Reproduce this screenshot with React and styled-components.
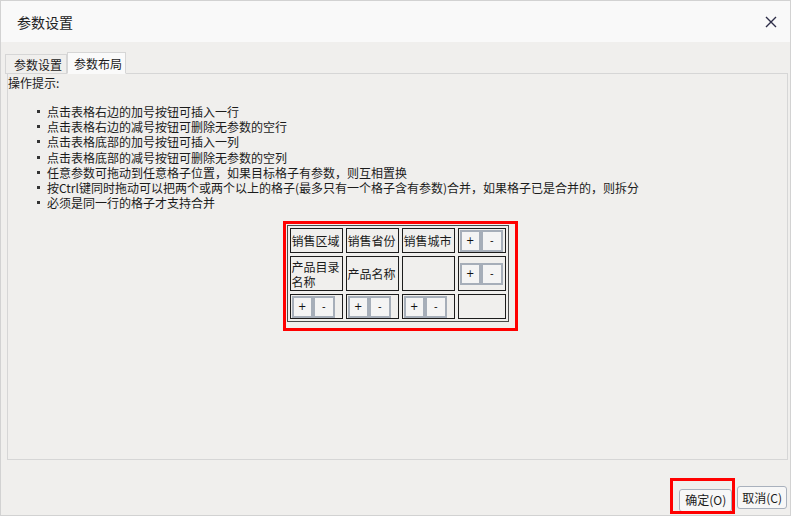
import React from "react";
import styled, { createGlobalStyle } from "styled-components";

const GlobalStyle = createGlobalStyle`
  html, body {
    margin: 0;
    padding: 0;
    background: #ffffff;
  }
  body {
    font-family: "Noto Sans CJK SC", "Microsoft YaHei", sans-serif;
    color: #1b1b1b;
  }
`;

const Dialog = styled.div`
  box-sizing: border-box;
  width: 791px;
  height: 516px;
  border: 1px solid #d2d2d2;
  background: #f0efed;
  display: flex;
  flex-direction: column;
`;

const Header = styled.div`
  height: 41px;
  flex-shrink: 0;
  background: #f9f9f9;
  display: flex;
  align-items: center;
  justify-content: space-between;
  padding: 0 12px 0 16px;
`;

const Title = styled.div`
  font-size: 14px;
  line-height: 20px;
  color: #222;
`;

const CloseButton = styled.button`
  border: 0;
  background: transparent;
  padding: 0;
  width: 14px;
  height: 14px;
  display: flex;
  align-items: center;
  justify-content: center;
  cursor: pointer;
`;

const Body = styled.div`
  flex: 1;
  display: flex;
  flex-direction: column;
  padding: 11px 2px 0 6px;
  min-height: 0;
`;

const TabStrip = styled.div`
  display: flex;
  align-items: flex-end;
  height: 21px;
  margin: 0 0 -1px -2px;
  position: relative;
  z-index: 1;
`;

const Tab = styled.div`
  box-sizing: border-box;
  width: ${(p) => p.$width}px;
  height: ${(p) => (p.$active ? 22 : 20)}px;
  padding-left: ${(p) => (p.$active ? 6 : 8)}px;
  font-size: 12px;
  line-height: ${(p) => (p.$active ? 21 : 19)}px;
  border: 1px solid #d6d6d6;
  border-bottom: ${(p) => (p.$active ? "1px solid #fafafa" : "1px solid #d6d6d6")};
  background: ${(p) => (p.$active ? "#fafafa" : "#f0efed")};
  color: #1b1b1b;
`;

const Panel = styled.div`
  flex: 1;
  border: 1px solid #d6d6d6;
  font-size: 12px;
  line-height: 15.2px;
`;

const Hint = styled.div`
  padding: 1px 0 0 0;
  line-height: 15px;
`;

const Tips = styled.ul`
  list-style: none;
  margin: 14px 0 15px 0;
  padding: 0 0 0 39px;
`;

const Tip = styled.li`
  position: relative;
  line-height: 15.17px;
  white-space: nowrap;

  &::before {
    content: "";
    position: absolute;
    left: -10px;
    top: 6px;
    width: 3px;
    height: 3px;
    background: #333;
  }
`;

const LayoutArea = styled.div`
  display: flex;
  justify-content: center;
`;

/* red highlight frame drawn over a block */
const Marked = styled.div`
  position: relative;
  display: inline-block;

  &::after {
    content: "";
    position: absolute;
    top: ${(p) => -p.$t}px;
    left: ${(p) => -p.$l}px;
    right: ${(p) => -p.$r}px;
    bottom: ${(p) => -p.$b}px;
    border: 3px solid #ff0000;
    pointer-events: none;
  }
`;

const Grid = styled.div`
  display: grid;
  grid-template-columns: 53px 53px 53px 48px;
  grid-template-rows: 25px 35px 25px;
  gap: 3px;
  padding: 2px;
  border: 1px solid #4a4a4a;
`;

const Cell = styled.div`
  box-sizing: border-box;
  border: 1px solid #1c1c1c;
  padding: 0 1px;
  display: flex;
  align-items: center;
  font-size: 12px;
  line-height: 15px;
  color: #1b1b1b;
  overflow: hidden;
`;

const PairGroup = styled.div`
  display: flex;
`;

const MiniButton = styled.button`
  box-sizing: border-box;
  width: 21.5px;
  height: 22px;
  border: 2px solid #a6aeb9;
  background: #f4f4f4;
  padding: 0;
  font-family: "DejaVu Sans", sans-serif;
  font-size: 10px;
  line-height: 18px;
  color: #111;
  cursor: pointer;
`;

const Footer = styled.div`
  height: 55px;
  flex-shrink: 0;
  display: flex;
  justify-content: flex-end;
  align-items: flex-start;
  gap: 5px;
  padding: 26px 3px 0 0;
  box-sizing: border-box;
`;

const DialogButton = styled.button`
  box-sizing: border-box;
  height: 23px;
  min-width: ${(p) => p.$width}px;
  padding: 0 4px;
  border: 1px solid #a9b1bd;
  border-radius: 3px;
  background: #f7f7f7;
  font-family: "Noto Sans CJK SC", "Microsoft YaHei", sans-serif;
  font-size: 12px;
  line-height: 20px;
  color: #1b1b1b;
  cursor: pointer;
`;

const tips = [
  "点击表格右边的加号按钮可插入一行",
  "点击表格右边的减号按钮可删除无参数的空行",
  "点击表格底部的加号按钮可插入一列",
  "点击表格底部的减号按钮可删除无参数的空列",
  "任意参数可拖动到任意格子位置，如果目标格子有参数，则互相置换",
  "按Ctrl键同时拖动可以把两个或两个以上的格子(最多只有一个格子含有参数)合并，如果格子已是合并的，则拆分",
  "必须是同一行的格子才支持合并",
];

const Pair = () => (
  <PairGroup>
    <MiniButton>+</MiniButton>
    <MiniButton>-</MiniButton>
  </PairGroup>
);

const CloseIcon = () => (
  <svg width="12" height="12" viewBox="0 0 12 12">
    <path d="M1 1 L11 11 M11 1 L1 11" stroke="#2d2d47" strokeWidth="1.4" fill="none" />
  </svg>
);

const App = () => (
  <>
    <GlobalStyle />
    <Dialog>
      <Header>
        <Title>参数设置</Title>
        <CloseButton aria-label="关闭">
          <CloseIcon />
        </CloseButton>
      </Header>

      <Body>
        <TabStrip>
          <Tab $width={62}>参数设置</Tab>
          <Tab $width={59} $active>
            参数布局
          </Tab>
        </TabStrip>

        <Panel>
          <Hint>操作提示:</Hint>
          <Tips>
            {tips.map((t) => (
              <Tip key={t}>{t}</Tip>
            ))}
          </Tips>

          <LayoutArea>
            <Marked $t={4} $l={4} $r={9} $b={9}>
              <Grid>
                <Cell>销售区域</Cell>
                <Cell>销售省份</Cell>
                <Cell>销售城市</Cell>
                <Cell>
                  <Pair />
                </Cell>

                <Cell>
                  产品目录
                  <br />
                  名称
                </Cell>
                <Cell>产品名称</Cell>
                <Cell />
                <Cell>
                  <Pair />
                </Cell>

                <Cell>
                  <Pair />
                </Cell>
                <Cell>
                  <Pair />
                </Cell>
                <Cell>
                  <Pair />
                </Cell>
                <Cell />
              </Grid>
            </Marked>
          </LayoutArea>
        </Panel>
      </Body>

      <Footer>
        <Marked $t={8} $l={9} $r={3} $b={2}>
          <DialogButton $width={53}>确定(O)</DialogButton>
        </Marked>
        <DialogButton $width={49}>取消(C)</DialogButton>
      </Footer>
    </Dialog>
  </>
);

export default App;
